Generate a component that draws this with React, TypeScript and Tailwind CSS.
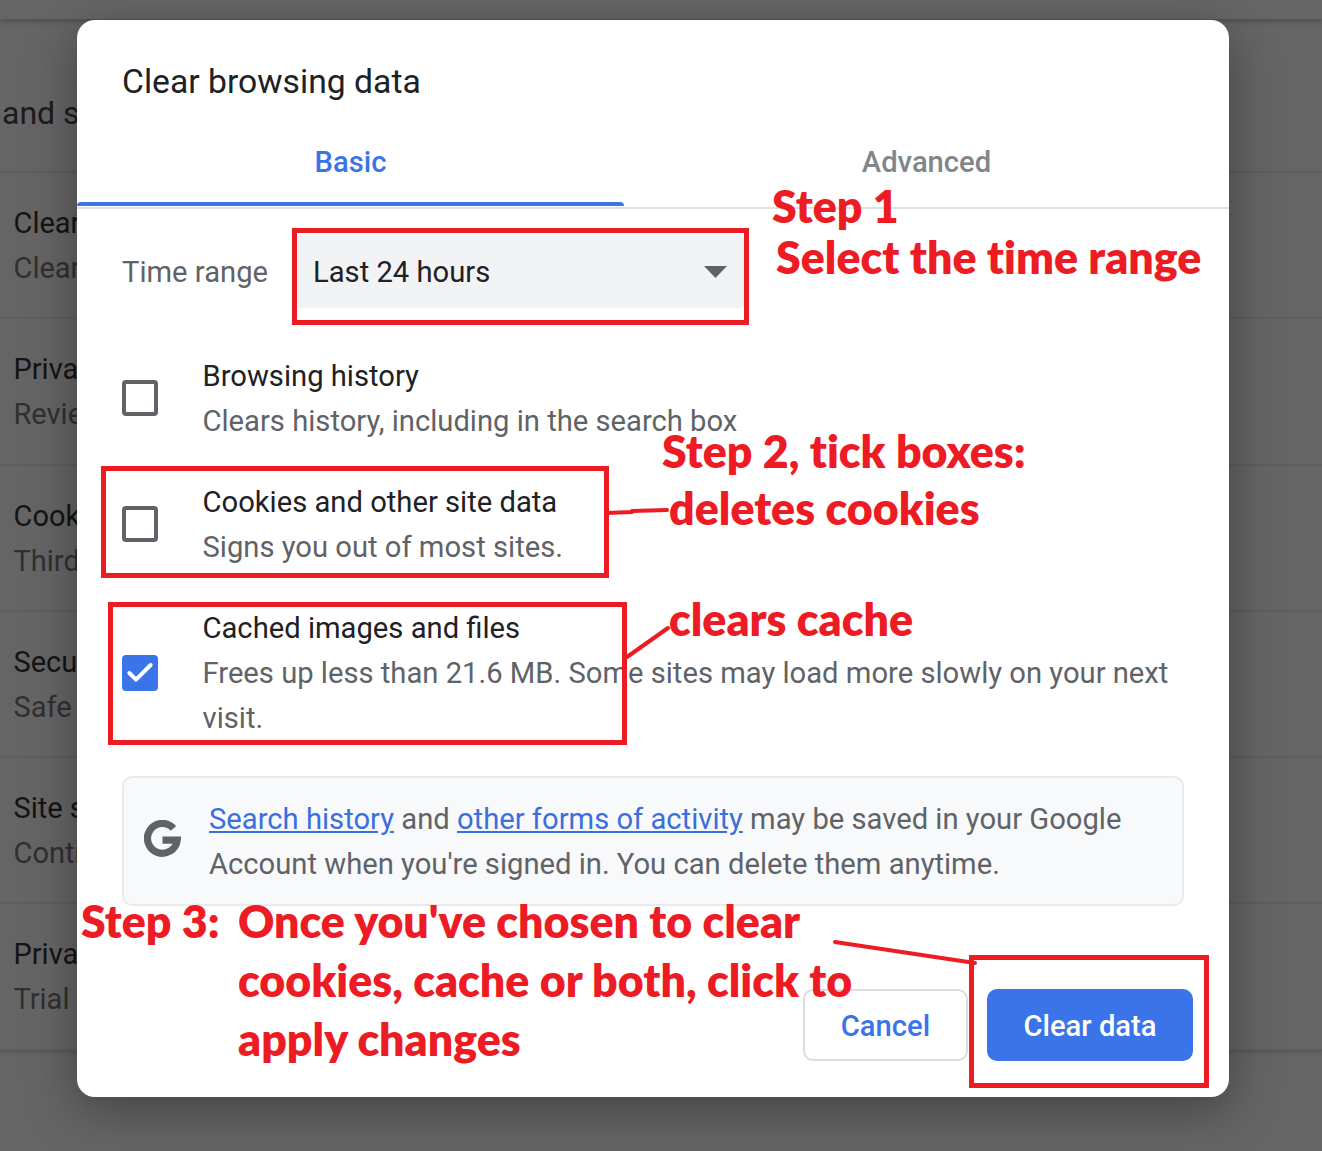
import { Check } from 'lucide-react';

const settingsRows = [
  { title: 'Clear browsing data', sub: 'Clear history, cookies, cache, and more' },
  { title: 'Privacy Guide', sub: 'Review key privacy and security controls' },
  { title: 'Cookies and other site data', sub: 'Third-party cookies are blocked' },
  { title: 'Security', sub: 'Safe Browsing and other security settings' },
  { title: 'Site settings', sub: 'Controls what information sites can use' },
  { title: 'Privacy Sandbox', sub: 'Trial features are on' },
];

const checkRows = [
  { title: 'Browsing history', lines: ['Clears history, including in the search box'], checked: false },
  { title: 'Cookies and other site data', lines: ['Signs you out of most sites.'], checked: false },
  { title: 'Cached images and files', lines: ['Frees up less than 21.6 MB. Some sites may load more slowly on your next', 'visit.'], checked: true },
];

function Settings() {
  return (
    <div className="flex flex-col w-full h-full bg-[#656565]">
      <div className="h-[19px] shrink-0 bg-[#666666] shadow-[0_2px_6px_rgba(0,0,0,0.25)]" />
      <div className="h-[152px] shrink-0 pl-[2px] pt-[74px] text-[32px] leading-[40px] text-[#1c1c1c]">and security</div>
      <div className="border-b-2 border-[#5c5c5c] shadow-[0_2px_4px_rgba(0,0,0,0.12)]">
        {settingsRows.map((row) => (
          <div key={row.title} className="h-[146.3px] border-t-2 border-[#5e5e5e] pl-[13.5px] pt-[28px] leading-[45px] text-[29px] whitespace-nowrap">
            <div className="text-[#141414]">{row.title}</div>
            <div className="text-[#303030]">{row.sub}</div>
          </div>
        ))}
      </div>
    </div>
  );
}

function CheckRow({ title, lines, checked }: { title: string; lines: string[]; checked: boolean }) {
  return (
    <div className="flex items-center">
      {checked ? (
        <div className="w-[36px] h-[36px] rounded-[4px] bg-[#3b74e8] flex items-center justify-center shrink-0">
          <Check className="w-[32px] h-[32px] text-white" strokeWidth={3} />
        </div>
      ) : (
        <div className="w-[36px] h-[36px] rounded-[4px] border-[4px] border-[#5f6368] shrink-0" />
      )}
      <div className="ml-[44.5px] pt-[2px] leading-[45px]">
        <div className="text-[#202124]">{title}</div>
        {lines.map((line) => (
          <div key={line} className="text-[#5f6368] whitespace-nowrap">{line}</div>
        ))}
      </div>
    </div>
  );
}

function Dialog() {
  return (
    <div className="absolute left-[77px] top-[20px] w-[1152px] h-[1077px] bg-white rounded-[18px] shadow-[0_12px_50px_rgba(0,0,0,0.35)] overflow-hidden text-[29.2px]">
      <div className="pl-[45px] pt-[39px] text-[33.7px] leading-[46px] text-[#202124]">Clear browsing data</div>
      <div className="flex mt-[34px] border-b-[2px] border-[#e0e0e0] h-[70px] font-medium">
        <div className="w-[547px] relative text-center leading-[46px] text-[#3b74e8]">
          Basic
          <div className="absolute left-0 right-0 bottom-[1px] h-[4px] rounded-t-[4px] bg-[#3b74e8]" />
        </div>
        <div className="flex-1 text-center leading-[46px] text-[#80868b]">Advanced</div>
      </div>
      <div className="flex items-center pl-[45px] mt-[26px]">
        <span className="w-[174px] pt-[2px] text-[#5f6368]">Time range</span>
        <div className="w-[449px] h-[73px] rounded-[6px] bg-[#f1f3f4] flex items-center justify-between pl-[17px] pr-[18px] text-[#202124]">
          <span className="pt-[2px]">Last 24 hours</span>
          <svg width="23" height="12" viewBox="0 0 23 12"><path d="M0 0h23L11.5 12z" fill="#5f6368" /></svg>
        </div>
      </div>
      <div className="flex flex-col pl-[45px] mt-[44px] gap-[34px]">
        {checkRows.map((row) => (
          <CheckRow key={row.title} {...row} />
        ))}
      </div>
      <div className="ml-[45px] mt-[35px] w-[1062px] h-[130px] rounded-[10px] border-2 border-[#e8eaed] bg-[#f8f9fa] flex items-center">
        <svg className="ml-[20px] mb-[6px] shrink-0" width="37" height="37" viewBox="0 0 36 36" fill="none" stroke="#5f6368" strokeWidth="7">
          <path d="M28.7 8.2A14.5 14.5 0 1 0 32.3 19.5H18" />
        </svg>
        <div className="ml-[28px] pt-[2px] leading-[45px] text-[#5f6368] whitespace-nowrap">
          <div>
            <span className="text-[#3b6fdc] underline">Search history</span> and{' '}
            <span className="text-[#3b6fdc] underline">other forms of activity</span> may be saved in your Google
          </div>
          <div>Account when you're signed in. You can delete them anytime.</div>
        </div>
      </div>
      <div className="absolute right-[36px] top-[969px] flex gap-[19px] font-medium">
        <div className="w-[165px] h-[72px] pt-[3px] rounded-[10px] border-2 border-[#dadce0] flex items-center justify-center text-[#3b74e8]">Cancel</div>
        <div className="w-[206px] h-[72px] pt-[3px] rounded-[10px] bg-[#3b74e8] flex items-center justify-center text-white">Clear data</div>
      </div>
    </div>
  );
}

const labels = [
  { text: 'Step 1', cls: 'left-[772px] top-[178px]' },
  { text: 'Select the time range', cls: 'left-[776px] top-[229px]' },
  { text: 'Step 2, tick boxes:', cls: 'left-[662px] top-[423px]' },
  { text: 'deletes cookies', cls: 'left-[669px] top-[480px]' },
  { text: 'clears cache', cls: 'left-[669px] top-[591px]' },
  { text: 'Step 3:', cls: 'left-[81px] top-[893px]' },
  { text: "Once you've chosen to clear", cls: 'left-[238px] top-[893px]' },
  { text: 'cookies, cache or both, click to', cls: 'left-[238px] top-[952px]' },
  { text: 'apply changes', cls: 'left-[238px] top-[1011px]' },
];

const boxes = [
  'left-[292px] top-[228px] w-[457px] h-[97px]',
  'left-[101px] top-[466px] w-[508px] h-[112px]',
  'left-[108px] top-[602px] w-[519px] h-[143px]',
  'left-[969px] top-[955px] w-[240px] h-[133px]',
];

function Annotations() {
  return (
    <>
      {boxes.map((cls) => (
        <div key={cls} className={`absolute border-[5px] border-[#ed1c24] ${cls}`} />
      ))}
      <svg className="absolute left-0 top-0" width="1322" height="1151" fill="none" stroke="#ed1c24" strokeWidth="4" strokeLinecap="round">
        <path d="M606 513 L632 512 M632 511 L667 510" />
        <path d="M627 657 L668 628" />
        <path d="M835 942 L975 963" />
      </svg>
      {labels.map((l) => (
        <div key={l.text} className={`absolute whitespace-nowrap font-extrabold [font-variant-ligatures:none] text-[#ed1c24] text-[44.7px] leading-[56px] font-['Lato',sans-serif] ${l.cls}`}>
          {l.text}
        </div>
      ))}
    </>
  );
}

export default function App() {
  return (
    <div className="relative w-full h-[1151px] overflow-hidden font-['Roboto',sans-serif]">
      <Settings />
      <Dialog />
      <Annotations />
    </div>
  );
}
